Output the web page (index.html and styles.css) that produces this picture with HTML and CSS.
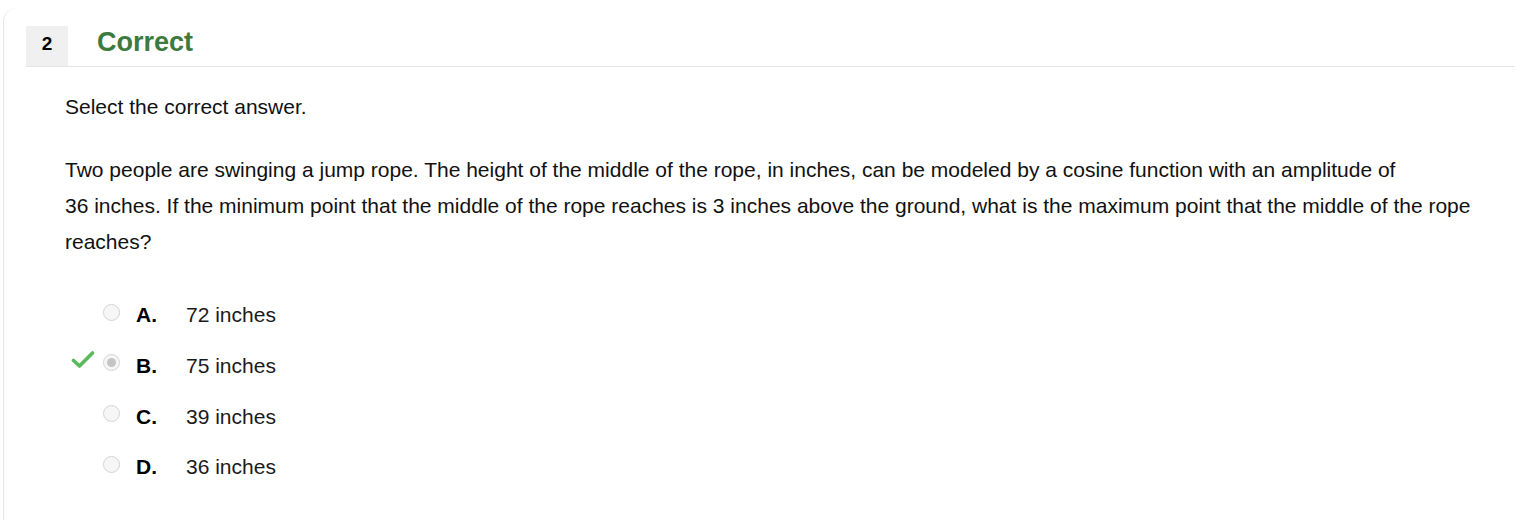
FILE: index.html
```html
<!DOCTYPE html>
<html lang="en">
<head>
    <meta charset="UTF-8">
    <title>Question 2</title>
    <link rel="stylesheet" href="styles.css">
</head>
<body>
    <div class="question">
        <div class="question-head">
            <div class="question-num">2</div>
            <div class="question-status">Correct</div>
        </div>
        <div class="question-body">
            <p class="prompt">Select the correct answer.</p>
            <p class="stem">Two people are swinging a jump rope. The height of the middle of the rope, in inches, can be modeled by a cosine function with an amplitude of<br>36 inches. If the minimum point that the middle of the rope reaches is 3 inches above the ground, what is the maximum point that the middle of the rope reaches?</p>
            <ul class="choices">
                <li class="choice">
                    <span class="mark"></span>
                    <span class="radio"></span>
                    <span class="letter">A.</span>
                    <span class="answer">72 inches</span>
                </li>
                <li class="choice">
                    <span class="mark">
                        <svg width="24" height="20" viewBox="0 0 24 20"><path d="M2.5 10.5 L8.5 16 L21.5 3" fill="none" stroke="#5cb85c" stroke-width="3.6" stroke-linecap="round" stroke-linejoin="round"/></svg>
                    </span>
                    <span class="radio selected"></span>
                    <span class="letter">B.</span>
                    <span class="answer">75 inches</span>
                </li>
                <li class="choice">
                    <span class="mark"></span>
                    <span class="radio"></span>
                    <span class="letter">C.</span>
                    <span class="answer">39 inches</span>
                </li>
                <li class="choice">
                    <span class="mark"></span>
                    <span class="radio"></span>
                    <span class="letter">D.</span>
                    <span class="answer">36 inches</span>
                </li>
            </ul>
        </div>
    </div>
</body>
</html>
```

FILE: styles.css
```css
body {
    margin: 0;
    background: #fff;
    font-family: "Liberation Sans", Arial, sans-serif;
    color: #111;
}
.question {
    border-left: 1px solid #e6e6e6;
    border-top-left-radius: 14px;
    margin: 8px 0 0 3px;
    padding: 18px 20px 0 22px;
    min-height: 520px;
}
.question-head {
    display: flex;
    align-items: center;
    border-bottom: 1px solid #e4e4e4;
}
.question-num {
    width: 42px;
    height: 40px;
    padding-bottom: 4px;
    box-sizing: border-box;
    background: #f0f0f0;
    display: flex;
    align-items: center;
    justify-content: center;
    font-weight: bold;
    font-size: 19px;
    color: #000;
}
.question-status {
    margin-left: 29px;
    padding-bottom: 8px;
    font-size: 27px;
    font-weight: bold;
    color: #3d7a3d;
}
.question-body {
    padding-left: 39px;
}
.prompt {
    font-size: 21px;
    margin: 26px 0 0;
    line-height: 28px;
}
.stem {
    font-size: 21px;
    line-height: 36px;
    margin: 31px 0 0;
}
.choices {
    list-style: none;
    padding: 0;
    margin: 30px 0 0;
}
.choice {
    display: flex;
    align-items: center;
    height: 50.67px;
    font-size: 21px;
    color: #1a1a1a;
}
.mark {
    width: 38px;
    display: flex;
    align-items: center;
    justify-content: flex-start;
    padding-left: 6px;
    box-sizing: border-box;
    margin-top: -12px;
}
.radio {
    width: 17px;
    height: 17px;
    border-radius: 50%;
    border: 1.5px solid #d4d4d4;
    background: #f6f6f6;
    box-sizing: border-box;
    margin-top: -6px;
    position: relative;
}
.radio.selected::after {
    content: "";
    position: absolute;
    left: 2.5px;
    top: 2.5px;
    width: 9px;
    height: 9px;
    border-radius: 50%;
    background: #c4c4c4;
}
.letter {
    font-weight: bold;
    margin-left: 16px;
    width: 50px;
    color: #000;
}
```
